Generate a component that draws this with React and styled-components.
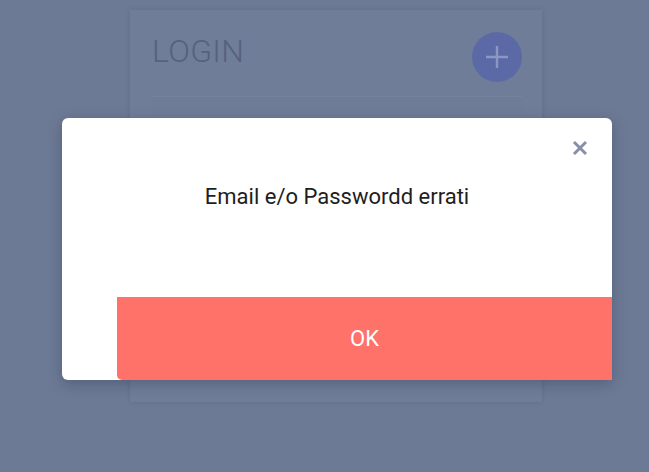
import React from "react";
import styled, { createGlobalStyle } from "styled-components";

const Global = createGlobalStyle`
  html, body {
    margin: 0;
    padding: 0;
    height: 100%;
    background: #6d7a95;
    font-family: Roboto, "Liberation Sans", sans-serif;
  }
`;

const Page = styled.div`
  position: relative;
  width: 649px;
  height: 472px;
  overflow: hidden;
  background: #6d7a95;
`;

const Card = styled.div`
  width: 412px;
  height: 392px;
  margin: 10px 0 0 130px;
  background: #707d98;
  box-shadow: 0 0 4px rgba(60, 70, 95, 0.25);
  padding: 22px 20px 0 22px;
  box-sizing: border-box;
`;

const CardHeader = styled.div`
  display: flex;
  align-items: center;
  justify-content: space-between;
`;

const Title = styled.h1`
  margin: -12px 0 0;
  font-size: 32px;
  font-weight: 300;
  color: #56627d;
  letter-spacing: 0.3px;
`;

const Fab = styled.div`
  width: 50px;
  height: 50px;
  border-radius: 50%;
  background: #5c69a7;
  display: flex;
  align-items: center;
  justify-content: center;
`;

const Field = styled.div`
  margin-top: 14px;
  height: 40px;
  border-top: 1px solid #75829c;
  background: #6f7c97;
`;

const Modal = styled.div`
  position: absolute;
  left: 62px;
  top: 118px;
  width: 550px;
  height: 262px;
  background: #fff;
  border-radius: 6px;
  box-shadow: 0 4px 14px rgba(40, 50, 75, 0.35);
  display: flex;
  flex-direction: column;
`;

const Close = styled.button`
  position: absolute;
  right: 23px;
  top: 21px;
  border: 0;
  background: none;
  padding: 0;
  width: 18px;
  height: 18px;
  display: flex;
  align-items: center;
  justify-content: center;
`;

const Message = styled.p`
  margin: 66px 0 0;
  text-align: center;
  font-size: 22px;
  color: #1e1e1e;
`;

const OkButton = styled.button`
  margin: auto 0 0 55px;
  height: 83px;
  border: 0;
  border-radius: 0 0 0 5px;
  background: #ff726a;
  color: #fff;
  font-family: Roboto, "Liberation Sans", sans-serif;
  font-size: 22px;
`;

export default function App() {
  return (
    <Page>
      <Global />
      <Card>
        <CardHeader>
          <Title>LOGIN</Title>
          <Fab>
            <svg width="26" height="26" viewBox="0 0 26 26">
              <path d="M13 2v22M2 13h22" stroke="#8c96c2" strokeWidth="2.4" />
            </svg>
          </Fab>
        </CardHeader>
        <Field />
      </Card>
      <Modal>
        <Close>
          <svg width="16" height="16" viewBox="0 0 16 16">
            <path d="M2 2l12 12M14 2L2 14" stroke="#8790a8" strokeWidth="3" />
          </svg>
        </Close>
        <Message>Email e/o Passwordd errati</Message>
        <OkButton>OK</OkButton>
      </Modal>
    </Page>
  );
}
